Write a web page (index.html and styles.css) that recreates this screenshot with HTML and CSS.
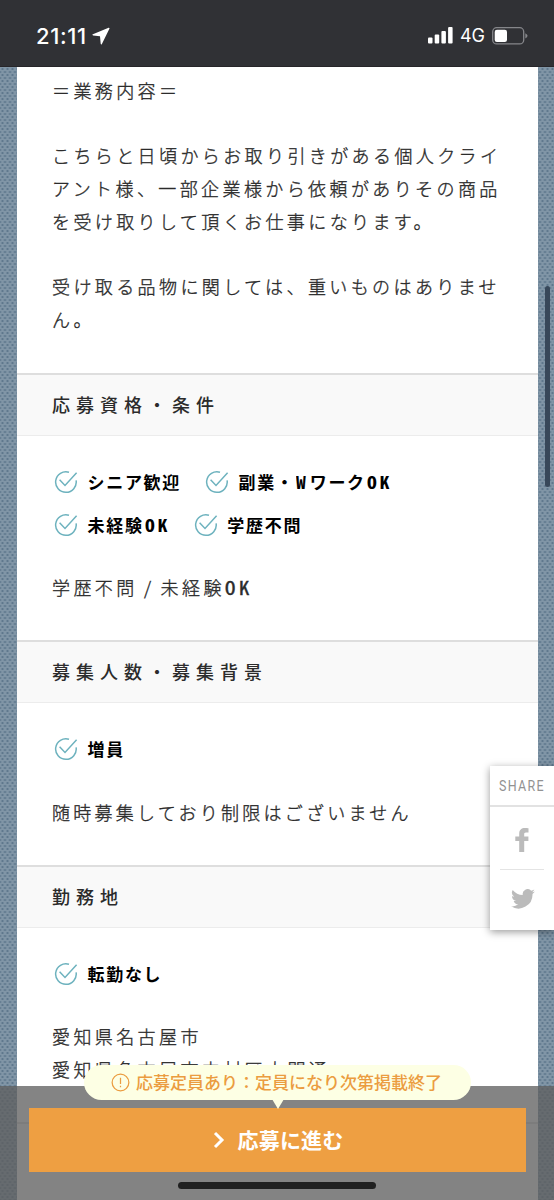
FILE: index.html
```html
<!DOCTYPE html>
<html lang="ja">
<head>
<meta charset="utf-8">
<meta name="viewport" content="width=device-width">
<title>募集要項</title>
<link rel="stylesheet" href="styles.css">
</head>
<body>
<svg class="defs" aria-hidden="true">
  <symbol id="check" viewBox="0 0 24 24"><path d="M15 2.2A10.3 10.3 0 1 0 22.1 10.4M5.6 9.7l5.4 5.7L22.6 2.8"/></symbol>
</svg>
<header class="status">
  <div class="clock">21:11
    <svg class="arrow" viewBox="0 0 18 18"><path d="M16.6.8.9 7.2q-1.2.8.2 1.3L8 9.3l.7 7.5q.4 1.2 1.200.1L17.500 1.500q.2-.9-.9-.7z"/></svg>
  </div>
  <div class="signals">
    <svg class="bars" viewBox="0 0 25 17"><rect y="10.5" width="4.5" height="6" rx="1"/><rect x="6.7" y="7.5" width="4.5" height="9" rx="1"/><rect x="13.4" y="4" width="4.5" height="12.5" rx="1"/><rect x="20.1" width="4.5" height="16.5" rx="1"/></svg>
    <span class="net">4G</span>
    <svg class="battery" viewBox="0 0 36 18"><rect x=".7" y=".7" width="31" height="16.2" rx="4" fill="none" stroke="#85868a" stroke-width="1.3"/><rect x="2.7" y="2.7" width="12.3" height="12.2" rx="2.2" fill="#fff"/><path d="M33.3 6.2q2.2 1 2.2 2.6t-2.2 2.6z" fill="#85868a"/></svg>
  </div>
</header>
<main class="card">
  <section class="intro">
    <p>＝業務内容＝</p>
    <p>こちらと日頃からお取り引きがある個人クライ<br>アント様、一部企業様から依頼がありその商品<br>を受け取りして頂くお仕事になります。</p>
    <p>受け取る品物に関しては、重いものはありませ<br>ん。</p>
  </section>
  <section>
    <h2>応募資格・条件</h2>
    <div class="content">
      <ul class="tags">
        <li><svg><use href="#check"/></svg>シニア歓迎</li>
        <li><svg><use href="#check"/></svg>副業・<span class="lat">W</span>ワーク<span class="lat">OK</span></li>
        <li><svg><use href="#check"/></svg>未経験<span class="lat">OK</span></li>
        <li><svg><use href="#check"/></svg>学歴不問</li>
      </ul>
      <p>学歴不問<span class="slash">/</span>未経験<span class="lat">OK</span></p>
    </div>
  </section>
  <section>
    <h2>募集人数・募集背景</h2>
    <div class="content">
      <ul class="tags"><li><svg><use href="#check"/></svg>増員</li></ul>
      <p class="tight">随時募集しており制限はございません</p>
    </div>
  </section>
  <section>
    <h2>勤務地</h2>
    <div class="content">
      <ul class="tags"><li><svg><use href="#check"/></svg>転勤なし</li></ul>
      <p>愛知県名古屋市<br>愛知県名古屋市中村区太閤通</p>
    </div>
  </section>
  <div class="next"></div>
</main>
<div class="scrollbar"></div>
<aside class="share">
  <div class="share-title"><span>SHARE</span></div>
  <div class="share-link fb"><svg viewBox="0 0 14 24"><path d="M13.500.3v4.200H11c-1.500 0-1.800.7-1.800 1.800v2.200h4.200v4.400H9.200V24H4.200V12.900H.3V8.500h3.900V5.600C4.200 2 6.500.1 9.900.1c1.500 0 3 .1 3.600.2z"/></svg></div>
  <div class="share-link tw"><svg viewBox="0 0 24 20"><path d="M23.900 2.400a10 10 0 0 1-2.800.8A4.900 4.900 0 0 0 23.300.5a10 10 0 0 1-3.100 1.200A4.900 4.900 0 0 0 11.800 6.100 14 14 0 0 1 1.700 1 4.900 4.900 0 0 0 3.200 7.500 5 5 0 0 1 1 6.900a4.900 4.900 0 0 0 3.900 4.900 5 5 0 0 1-2.200.1 4.900 4.900 0 0 0 4.600 3.400A10 10 0 0 1 0 17.300a14 14 0 0 0 21.500-12.400 10 10 0 0 0 2.400-2.500z"/></svg></div>
</aside>
<footer class="apply">
  <div class="notice"><svg viewBox="0 0 20 20"><circle cx="10" cy="10" r="8.8"/><path d="M10 5v6.500M10 13.300v1.700"/></svg><span>応募定員あり：定員になり次第掲載終了</span></div>
  <div class="button"><svg viewBox="0 0 12 18"><path d="M2 2l7 7-7 7"/></svg><span>応募に進む</span></div>
  <div class="home"></div>
</footer>
</body>
</html>
```
FILE: styles.css
```css
* { box-sizing: border-box; }
body {
  margin: 0;
  width: 554px;
  height: 1200px;
  overflow: hidden;
  position: relative;
  color: #2b2b2b;
  font-family: "Noto Sans CJK JP", sans-serif;
  background-color: #8095a6;
  background-image: radial-gradient(circle, #5f788d 0 .7px, transparent 1.5px), radial-gradient(circle, #5f788d 0 .7px, transparent 1.5px);
  background-size: 5px 6px;
  background-position: 0 0, 2.5px 3px;
}
h2, p, ul { margin: 0; padding: 0; }
.defs { position: absolute; width: 0; height: 0; }
.status {
  height: 67px;
  padding: 5px 26px 0 36px;
  display: flex;
  align-items: center;
  justify-content: space-between;
  background: #303135;
  border-bottom: 1px solid #262529;
  color: #fff;
  font-family: Inter, sans-serif;
}
.clock { display: flex; align-items: center; gap: 5px; font-size: 22px; font-weight: 500; letter-spacing: .6px; }
.arrow { width: 18px; height: 18px; fill: #fff; }
.signals { display: flex; align-items: center; }
.bars { width: 25px; height: 17px; fill: #fff; }
.net { margin: 0 7px; font-size: 18px; font-weight: 400; line-height: 20px; }
.battery { width: 36px; height: 18px; }
.card { width: 521px; height: 1133px; margin-left: 16.5px; background: #fff; }
.intro { height: 306px; padding: 7px 0 0 35.5px; }
p {
  font-size: 18px;
  font-weight: 300;
  letter-spacing: 3.4px;
  line-height: 32.7px;
  white-space: nowrap;
  -webkit-text-stroke: .35px currentColor;
}
.tight { letter-spacing: 3.25px; }
.intro p + p { margin-top: 32.7px; }
h2 {
  height: 63px;
  padding-left: 35.5px;
  font-size: 18px;
  font-weight: 500;
  letter-spacing: 6px;
  line-height: 58px;
  background: #f9f9f9;
  border-top: 2px solid #dedede;
  border-bottom: 1px solid #ececec;
}
.content { padding: 25px 0 36.5px 35.5px; }
.tags { display: flex; flex-wrap: wrap; column-gap: 22px; width: 400px; margin-bottom: 24px; padding-bottom: 1px; list-style: none; }
.tags li { display: flex; align-items: center; height: 42.5px; color: #000; font-size: 17px; font-weight: 700; letter-spacing: 1.7px; line-height: 24px; }
.tags svg { width: 24px; height: 24px; margin: 0 9.500px 0 2px; fill: none; stroke: #6db2be; stroke-width: 1.5; }
.lat {
  display: inline-block;
  font-family: "Noto Sans Mono CJK JP", "Noto Sans CJK JP", sans-serif;
  line-height: 24px;
  letter-spacing: 3.2px;
  transform: scaleX(1.15);
  transform-origin: left;
}
.tags .lat { letter-spacing: 2.6px; margin: 0 3px 0 1px; }
.slash { margin: 0 6px 0 6.5px; }
.next { height: 100px; border-top: 2px solid #dedede; background: #f9f9f9; }
.scrollbar { position: absolute; top: 286px; right: 4px; width: 5px; height: 201px; border-radius: 3px; background: #38485a; }
.share { position: absolute; top: 766px; right: 0; width: 64px; height: 164px; background: #fff; box-shadow: 0 2px 8px rgba(0,0,0,.4); }
.share-title { height: 41px; padding-left: 9px; border-bottom: 2px solid #e2e2e2; color: #929292; font: 14.5px/42px Roboto, sans-serif; letter-spacing: 1.5px; }
.share-title span { display: inline-block; transform: scaleX(.86); transform-origin: left; }
.share-link { display: flex; justify-content: center; align-items: center; fill: #bbb; }
.fb { height: 63px; margin: 0 10px; border-bottom: 1px solid #e4e4e4; padding-top: 4px; }
.fb svg { width: 14px; height: 24px; }
.tw { height: 58px; padding-left: 2px; }
.tw svg { width: 24px; height: 20px; }
.apply { position: absolute; left: 0; bottom: 0; width: 554px; height: 114px; padding: 21.5px 28.5px 0; background: rgba(93,93,93,.76); }
.button { height: 64px; display: flex; align-items: center; justify-content: center; gap: 13px; background: #ee9f42; color: #fff; font-size: 21px; font-weight: 700; letter-spacing: .2px; padding-left: 2px; }
.button span { margin-top: -1px; }
.button svg { width: 12px; height: 18px; fill: none; stroke: #fff; stroke-width: 3; }
.notice { position: absolute; left: 84px; top: -21px; width: 387px; height: 35px; padding-left: 27px; display: flex; align-items: center; gap: 6px; border-radius: 18px; background: #fdffe4; color: #eb9c40; font-size: 17px; font-weight: 500; white-space: nowrap; }
.notice span { margin-top: -2px; }
.notice::after { content: ""; position: absolute; left: 188px; top: 34px; border: solid transparent; border-width: 10px 6px 0; border-top-color: #fdffe4; }
.notice svg { width: 19px; height: 19px; fill: none; stroke: #eb9c40; stroke-width: 1.3; }
.home { width: 198px; height: 7px; margin: 10px auto 0; border-radius: 4px; background: #202020; }
```
